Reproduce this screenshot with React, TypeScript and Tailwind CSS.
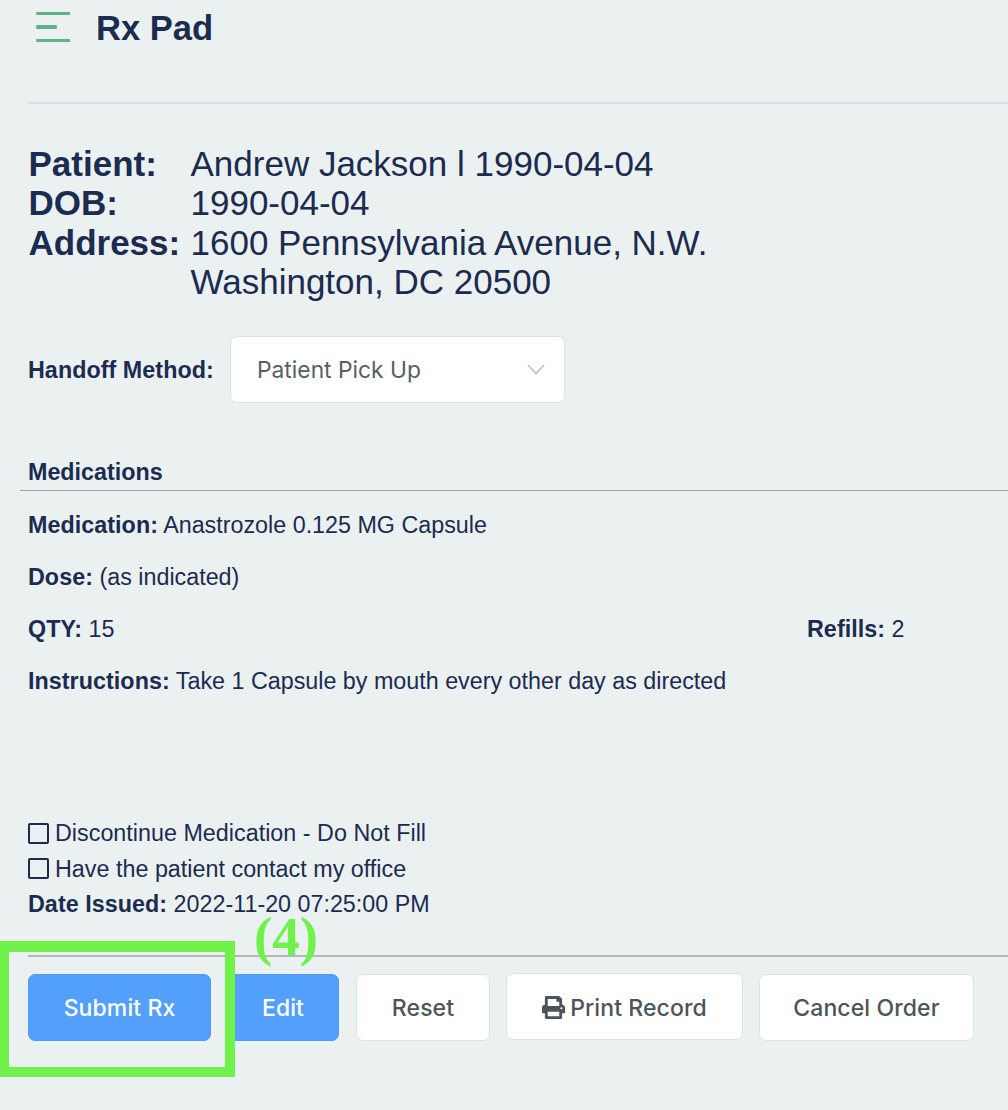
import type { ReactNode } from 'react';
import { FaPrint } from 'react-icons/fa';

function Field({ label, children }: { label: string; children: ReactNode }) {
  return (
    <p className="h-[52px] leading-[52px] whitespace-nowrap">
      <b className="tracking-[0.05px]">{label}</b> {children}
    </p>
  );
}

function Check({ children }: { children: ReactNode }) {
  return (
    <label className="flex h-[35.3px] items-center gap-[6px] leading-[35.3px] tracking-[0.02px]">
      <span className="relative -top-px size-[21px] rounded-[2px] border-2 border-[#1c2b50]" />
      {children}
    </label>
  );
}

function Button({ primary, className, children }: { primary?: boolean; className: string; children: ReactNode }) {
  const tone = primary
    ? 'border-[#4f9dfb] bg-[#529ffc] text-white'
    : 'border-[#d9e3ea] bg-white text-[#4b5559]';
  return (
    <button
      className={`flex h-[67px] shrink-0 items-center justify-center rounded-[7px] border font-['Inter',sans-serif] text-[23px] font-medium tracking-[0.1px] whitespace-nowrap ${tone} ${className}`}
    >
      {children}
    </button>
  );
}

const patient = [
  ['Patient:', 'Andrew Jackson l 1990-04-04'],
  ['DOB:', '1990-04-04'],
  ['Address:', '1600 Pennsylvania Avenue, N.W.'],
  ['', 'Washington, DC 20500'],
];

export default function App() {
  return (
    <div className="flex h-[1110px] w-[1008px] flex-col overflow-hidden bg-[#ebf1f1] font-['Liberation_Sans',sans-serif] text-[23.3px] text-[#1c2b50]">
      <header className="flex h-[58px] shrink-0 items-center pl-9">
        <svg width="35" height="30" viewBox="0 0 35 30" className="relative -top-[2px] text-[#5cb486]" fill="currentColor">
          <rect x="0.3" y="0" width="33.7" height="3" />
          <rect x="0.3" y="13" width="20.5" height="4" />
          <rect x="0.3" y="27" width="33.7" height="3" />
        </svg>
        <h1 className="ml-[25px] text-[34.6px] font-bold">Rx Pad</h1>
      </header>
      <hr className="mt-11 ml-7 shrink-0 border-t-2 border-[#d9dfe5]" />

      <dl className="mt-[39.5px] ml-[28.5px] grid shrink-0 grid-cols-[162px_1fr] text-[35px] leading-[39.6px] whitespace-nowrap">
        {patient.map(([label, value]) => (
          <div key={value} className="contents">
            <dt className="font-bold">{label}</dt>
            <dd>{value}</dd>
          </div>
        ))}
      </dl>

      <div className="mt-[34.5px] ml-7 flex h-[67px] shrink-0 items-center">
        <span className="w-[202px] pt-[2px] font-bold tracking-[0.05px]">Handoff Method:</span>
        <div className="flex h-[67px] w-[335px] items-center justify-between rounded-[7px] border border-[#d9e3e8] bg-white pr-[19px] pl-[26px] font-['Inter',sans-serif] text-[22.8px] text-[#565f62]">
          Patient Pick Up
          <svg width="18" height="11" viewBox="0 0 18 11" fill="none" stroke="#b9c4cd" strokeWidth="1.6">
            <path d="M1 1l8 8.5L17 1" />
          </svg>
        </div>
      </div>

      <h2 className="mt-[54px] ml-5 h-[34px] shrink-0 border-b border-[#98a1a5] pl-2 leading-[30px] font-bold">
        Medications
      </h2>

      <section className="mt-[8px] shrink-0 pl-7">
        <Field label="Medication:">Anastrozole 0.125 MG Capsule</Field>
        <Field label="Dose:">(as indicated)</Field>
        <div className="grid grid-cols-[779px_1fr]">
          <Field label="QTY:">15</Field>
          <Field label="Refills:">2</Field>
        </div>
        <Field label="Instructions:">Take 1 Capsule by mouth every other day as directed</Field>
      </section>

      <section className="mt-[109px] shrink-0 pl-7">
        <Check>Discontinue Medication - Do Not Fill</Check>
        <Check>Have the patient contact my office</Check>
        <p className="leading-[35.3px]">
          <b className="tracking-[0.05px]">Date Issued:</b> 2022-11-20 07:25:00 PM
        </p>
      </section>

      <footer className="relative mt-[33px] ml-7 flex shrink-0 items-start border-t-2 border-[#b0b9ba] pt-[17px]">
        <Button primary className="w-[183px]">Submit Rx</Button>
        <Button primary className="ml-4 w-[112px]">Edit</Button>
        <Button className="ml-[17px] w-[134px]">Reset</Button>
        <Button className="-mt-px ml-4 w-[237px] gap-[5px] pt-[2px]">
          <FaPrint className="size-[23px]" />
          Print Record
        </Button>
        <Button className="ml-4 w-[215px]">Cancel Order</Button>
        <div className="absolute -top-4 -left-[29px] h-[136px] w-[236px] border-x-10 border-t-11 border-b-10 border-[#71f24b]" />
        <span className="absolute -top-[43px] left-[226px] font-['Liberation_Serif',serif] text-[55px] leading-[46px] font-bold text-[#71f24b]">
          (4)
        </span>
      </footer>
    </div>
  );
}
